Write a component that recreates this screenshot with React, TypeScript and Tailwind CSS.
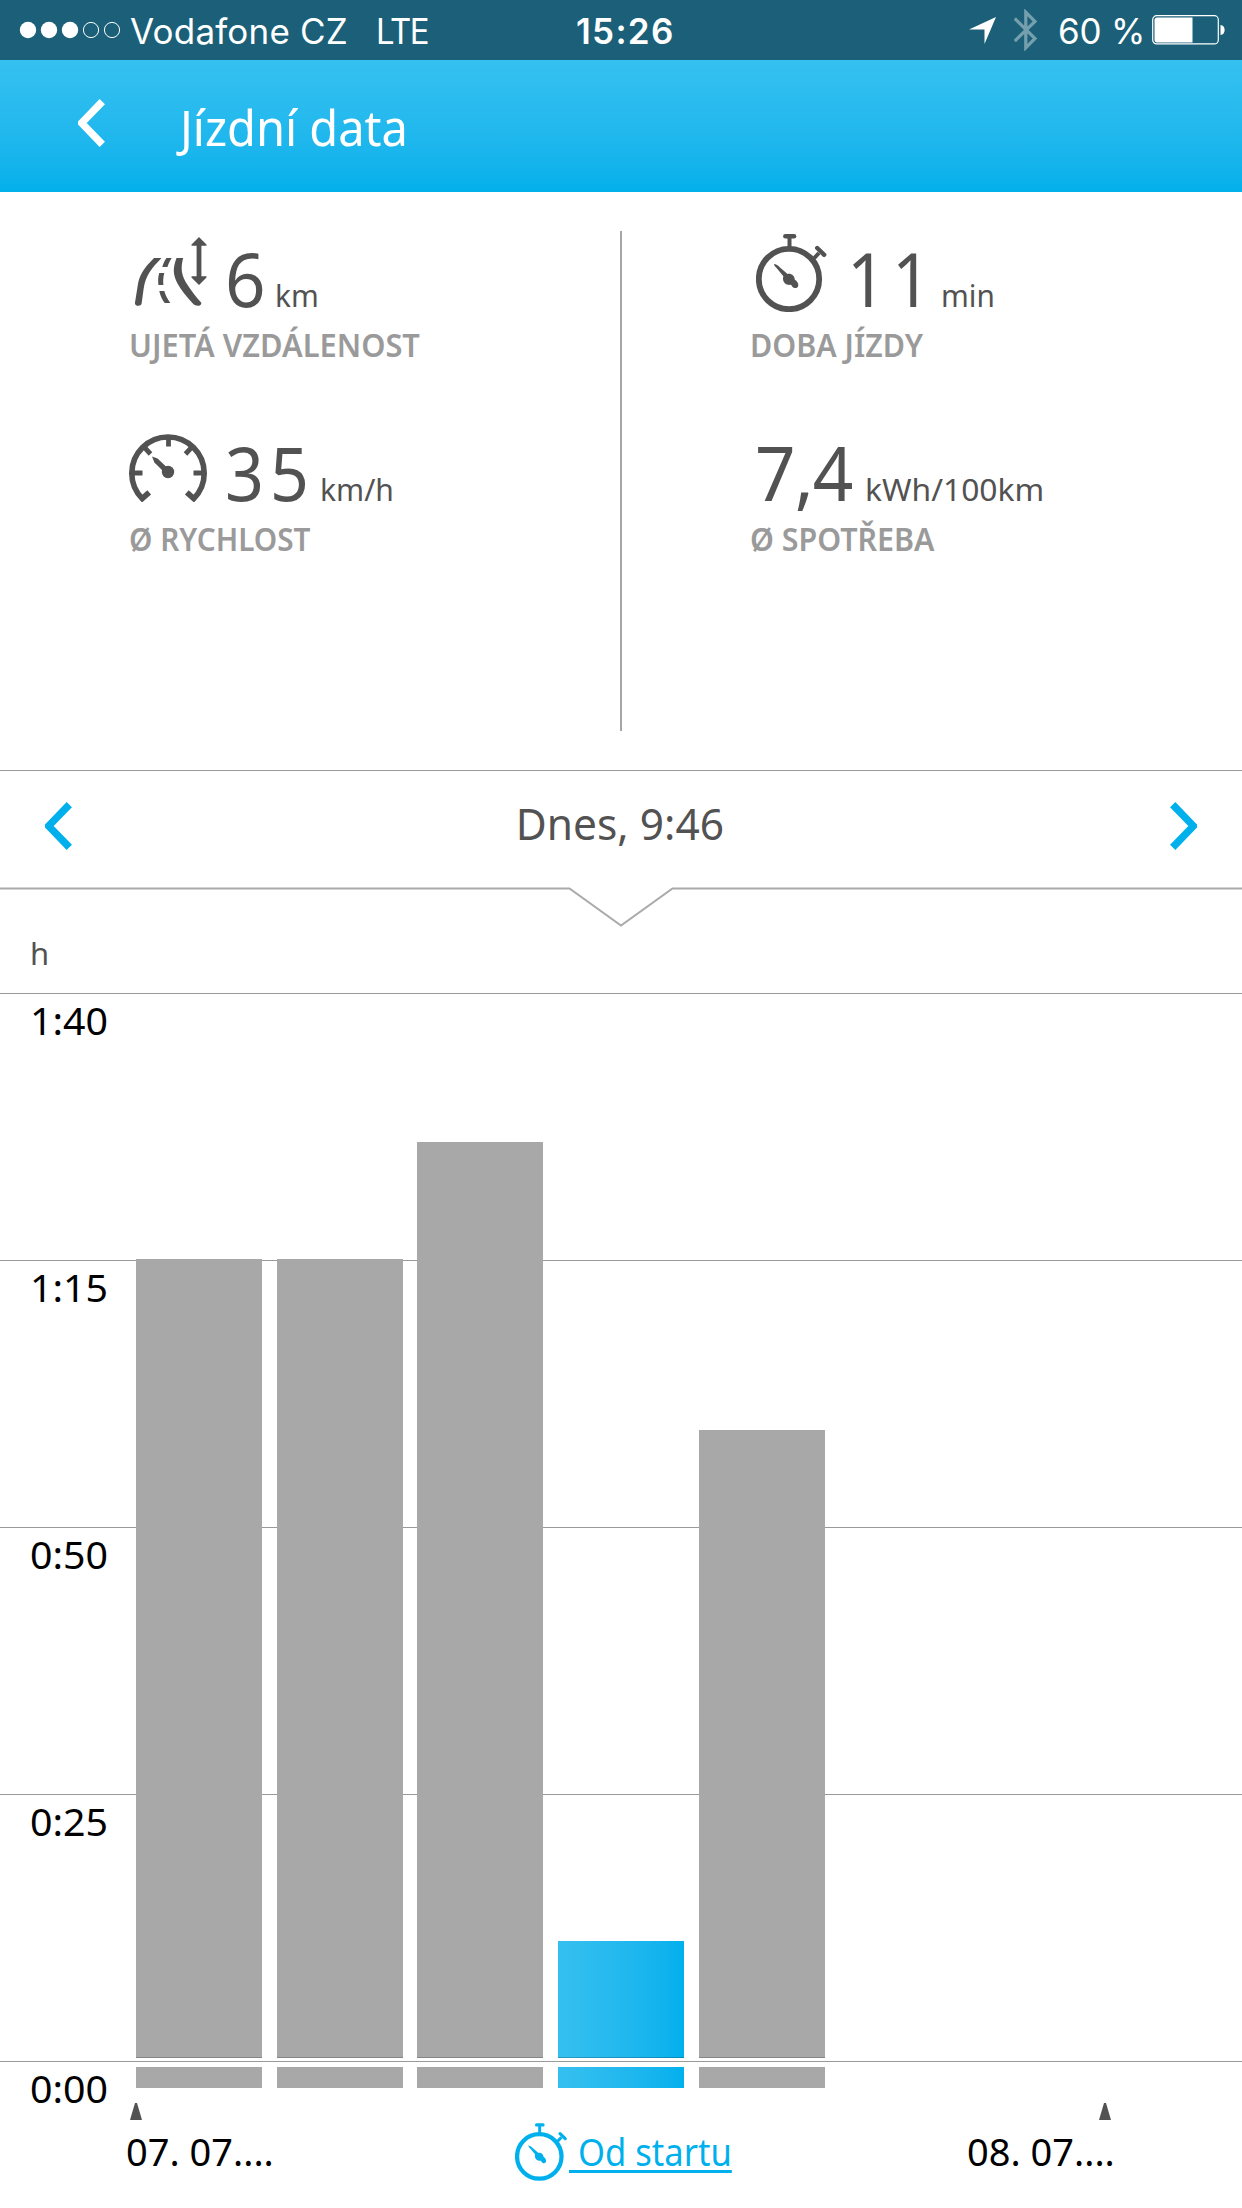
import type { ReactNode } from "react";

const bars = [
    { height: 799, className: "ml-0 bg-[#a8a8a8]" },
    { height: 799, className: "ml-[15px] bg-[#a8a8a8]" },
    { height: 916, className: "ml-[14px] bg-[#a8a8a8]" },
    { height: 117, className: "ml-[15px] bg-linear-to-r from-[#35c0ef] to-[#00b0ed]" },
    { height: 628, className: "ml-[15px] bg-[#a8a8a8]" },
];

const ticks = ["1:40", "1:15", "0:50", "0:25", "0:00"];

function Chevron({ className }: { className: string }) {
    return (
        <svg viewBox="0 0 27 48" className={className}>
            <path d="M24.3 2.7 3.6 24l20.7 21.3" fill="none" stroke="currentColor" strokeWidth="7.4" />
        </svg>
    );
}

function StopwatchIcon({ className }: { className: string }) {
    return (
        <svg viewBox="0 0 72 78" className={className} fill="none" stroke="currentColor">
            <circle cx="33" cy="45" r="30.2" strokeWidth="5.8" />
            <path d="M33.5 3v10" strokeWidth="4" />
            <path d="M29.3 2.2h8.8" strokeWidth="4.4" strokeLinecap="round" />
            <path d="M56.5 26l6.5-7" strokeWidth="4" />
            <path d="M61.2 14l7 6.8" strokeWidth="4.4" strokeLinecap="round" />
            <path d="M18 30c2 0 4 1.500 6 3.500l7.500 6.500c4-.8 7.200 2 7.200 5.400 2.300 1.600 3.800 3.600 3.600 6-.3 2.200-2.500 3.300-4.500 2.400-1.400-.6-2-2-2.800-3-4.300.7-8-1.700-8-6.300 0-.9.100-1.600.4-2.200l-6.400-7.800c-1.600-1.800-3-3-3-4.500z" fill="currentColor" stroke="none" />
        </svg>
    );
}

function RoadIcon({ className }: { className: string }) {
    return (
        <svg viewBox="0 0 72 69" className={className} fill="currentColor">
            <path d="M19 21H26.500C17 31 10.500 38 8.600 52l-1.900 14c-.2 2-1.200 2.700-3.400 2.700C.8 68.700-.3 67.500 0 65.500L2.500 50C4 38 9 31 19 21z" />
            <path d="M41.500 21h6.700c-2.700 10-2.200 17 4.400 27 4 6.300 8.500 12 13.300 17.200 1.100 1.600-.2 3.500-2.700 3.500-3 0-4-.7-6-3C51 59 46 53 42.500 46.500c-5-9.500-4.500-16-1-25.500z" />
            <path d="M31.500 21h5.200c-2 3.300-3.200 5.800-4.300 9h-5.100c1-3.600 2.200-6.200 4.200-9zM24.200 36h5.100c-1.100 4-1.300 8-.9 12h-5c-.5-4.500-.3-8 .8-12zM24.300 54h5c1.300 4.500 3.200 8 6 12h-5.600c-2.800-3.800-4.500-7.400-5.400-12z" />
            <path d="M64 0l7.500 7.500v1.300h-5.100v30.400h5.100v1.300L64 48l-7.500-7.500v-1.300h5.100V8.800h-5.100V7.500z" />
        </svg>
    );
}

function SpeedIcon({ className }: { className: string }) {
    return (
        <svg viewBox="0 0 78 69" className={className} fill="none" stroke="currentColor">
            <path d="M20.200 59.300l-7 6.300A36.200 36.200 0 1 1 64.800 65.600l-7-6.300" strokeWidth="5.600" />
            <path d="M39.500 5v8.500M15.500 14.500l6 6.500M62.500 14.500l-6 6.500M5 40h8.500M64.500 40H73" strokeWidth="4.800" />
            <circle cx="39" cy="39" r="6.200" fill="currentColor" stroke="none" />
            <path d="M23 23.500l5.500 2 12 11.300-3.800 4L25.400 29.500z" fill="currentColor" stroke="none" />
        </svg>
    );
}

function Stat({ icon, value, unit, label }: { icon?: ReactNode; value: ReactNode; unit: ReactNode; label: ReactNode }) {
    return (
        <div className="h-[194px]">
            <div className="flex h-[90px] text-[#525252]">
                {icon}
                <div className="flex items-baseline">
                    <span className="text-[74px] leading-[89px]">{value}</span>
                    <span className="text-[31px]">{unit}</span>
                </div>
            </div>
            <div className="mt-px text-[32px] leading-10 font-semibold whitespace-nowrap text-[#9a9a9a]">
                {label}
            </div>
        </div>
    );
}

function StatusBar() {
    return (
        <div className="flex h-[60px] items-center bg-[#1b6078] font-[Inter,sans-serif] text-[35px] whitespace-pre text-white">
            <svg viewBox="0 0 104 18" className="ml-[19px] h-[18px] w-[104px]" fill="currentColor">
                <circle cx="9" cy="9" r="8.2" />
                <circle cx="30" cy="9" r="8.2" />
                <circle cx="51" cy="9" r="8.2" />
                <circle cx="72" cy="9" r="7.6" fill="none" stroke="currentColor" />
                <circle cx="93" cy="9" r="7.6" fill="none" stroke="currentColor" />
            </svg>
            <span className="ml-[7px] w-[246px] pt-[2px] tracking-[0.2px]">Vodafone CZ</span>
            <span className="w-[200px] origin-left scale-x-[0.94] pt-[2px] tracking-[-1.5px]">LTE</span>
            <span className="w-[393px] pt-[2px] font-semibold tracking-[1.3px]">15:26</span>
            <svg viewBox="0 0 27 27" className="h-[27px] w-[27px]" fill="currentColor">
                <path d="M27 0 15.5 27V12.500H0z" />
            </svg>
            <svg viewBox="0 0 23 42" className="ml-[18px] h-[42px] w-[23px] opacity-40" fill="none" stroke="currentColor" strokeWidth="3.2">
                <path d="M.8 9.500 21 29.500l-9.200 9.300V3.200L21 12.500.8 32" />
            </svg>
            <span className="ml-[21px] w-[94px] pt-[2px] tracking-[-0.2px]">60 %</span>
            <svg viewBox="0 0 74 30" className="h-[30px] w-[74px]" fill="none" stroke="currentColor">
                <rect x=".7" y=".7" width="65.6" height="28.2" rx="4" strokeWidth="1.2" />
                <path d="M2.500 5c0-1.500 1-2.500 2.500-2.500h35.500v25H5C3.500 27.500 2.500 26.500 2.500 25z" fill="currentColor" stroke="none" />
                <path d="M68.500 10c5.500 0 5.500 10 0 10z" fill="currentColor" stroke="none" />
            </svg>
        </div>
    );
}

export default function App() {
    return (
        <div className="h-[2208px] w-[1242px] overflow-hidden bg-white font-['Noto_Sans',sans-serif]">
            <StatusBar />

            <header className="flex h-[132px] items-center bg-linear-to-b from-[#35c1f0] to-[#02b0eb] text-white">
                <Chevron className="mb-[6px] ml-[78px] h-12 w-[27px]" />
                <h1 className="ml-[75px] origin-left scale-x-[0.94] pt-[3px] text-[50px]">Jízdní data</h1>
            </header>

            {/* Trip summary */}
            <section className="flex h-[578px]">
                <div className="w-[620px] pt-[42px] pl-[129px]">
                    <Stat
                        icon={<RoadIcon className="mt-[3px] mr-[18px] ml-[6px] h-[69px] w-[72px]" />}
                        value={<span className="inline-block w-[50px] origin-left scale-x-[0.96]">6</span>}
                        unit={<span className="inline-block origin-left scale-x-[0.96]">km</span>}
                        label={<span className="inline-block origin-left scale-x-[0.963]">UJETÁ VZDÁLENOST</span>}
                    />
                    <Stat
                        icon={<SpeedIcon className="mt-[5px] mr-[18px] h-[69px] w-[78px]" />}
                        value={<span className="inline-block w-[95px] origin-left scale-x-[0.92] tracking-[6.5px]">35</span>}
                        unit={<span className="inline-block origin-left scale-x-[0.97]">km/h</span>}
                        label={<span className="inline-block origin-left scale-x-[0.93]">Ø RYCHLOST</span>}
                    />
                </div>
                <div className="mt-[39px] h-[500px] w-[2px] bg-[#a6a6a6]" />
                <div className="pt-[42px] pl-[128px]">
                    <Stat
                        icon={<StopwatchIcon className="mr-[19px] ml-[6px] h-[78px] w-[72px]" />}
                        value={<span className="inline-block w-[94px] origin-left scale-x-[0.92] tracking-[6.5px]">11</span>}
                        unit={<span className="inline-block origin-left scale-x-[0.96]">min</span>}
                        label={<span className="inline-block origin-left scale-x-[0.95]">DOBA JÍZDY</span>}
                    />
                    <Stat
                        value={<span className="ml-[5px] inline-block w-[110px] origin-left scale-x-[0.96] tracking-[-1px]">7,4</span>}
                        unit={<span className="inline-block origin-left scale-x-[1.025]">kWh/100km</span>}
                        label={<span className="inline-block origin-left scale-x-[0.95]">Ø SPOTŘEBA</span>}
                    />
                </div>
            </section>

            {/* Trip picker */}
            <nav className="flex h-[116px] items-center justify-between border-t border-[#999] pr-[45px] pl-[45px] text-[#00b0ed]">
                <Chevron className="mb-[6px] h-12 w-[27px]" />
                <span className="mr-[2px] mb-[11px] scale-x-[0.965] text-[44px] text-[#525252]">Dnes, 9:46</span>
                <Chevron className="mb-[6px] h-12 w-[27px] rotate-180" />
            </nav>
            <svg viewBox="0 0 1242 42" className="block h-[42px] w-full" fill="none" stroke="#aaa" strokeWidth="2">
                <path d="M0 2.500h569.500L621 39.500l51.500-37H1242" />
            </svg>
            <div className="h-[65px] pl-[30px] text-[31px] leading-[50px] text-[#525252]">h</div>

            {/* Chart */}
            <section className="grid text-[38px]">
                <div className="[grid-area:1/1]">
                    {ticks.map((tick) => (
                        <div key={tick} className="h-[267px] border-t border-[#999] pt-[6px] pl-[30px] leading-10 last:h-[147px]">
                            <span className="inline-block origin-left scale-x-[1.035]">{tick}</span>
                        </div>
                    ))}
                </div>
                <div className="z-10 [grid-area:1/1]">
                    <div className="flex h-[1095px] items-end pl-[136px]">
                        {bars.map((bar, i) => (
                            <div key={i} className="flex flex-col">
                                <div className={`${bar.className} w-[126px] border-b border-black/20`} style={{ height: bar.height }} />
                                <div className={`${bar.className} mt-[9px] h-[21px] w-[126px]`} />
                            </div>
                        ))}
                    </div>
                    <div className="flex h-8 items-end justify-between pr-[131px] pl-[130px] text-[#525252]">
                        <svg viewBox="0 0 12 17" className="h-[17px] w-3" fill="currentColor">
                            <path d="M5 0h2l5 17H0z" />
                        </svg>
                        <svg viewBox="0 0 12 17" className="h-[17px] w-3" fill="currentColor">
                            <path d="M5 0h2l5 17H0z" />
                        </svg>
                    </div>
                    <div className="flex h-[63px] items-center pl-[126px]">
                        <span className="w-[389px]">07. 07....</span>
                        <StopwatchIcon className="h-[60px] w-[53px] text-[#00b0ed]" />
                        <a className="ml-px w-[398px] origin-left scale-x-[0.91] whitespace-pre text-[#00b0ed] underline decoration-[3px] underline-offset-[4px]">
                            {" Od startu"}
                        </a>
                        <span>08. 07....</span>
                    </div>
                </div>
            </section>
        </div>
    );
}
